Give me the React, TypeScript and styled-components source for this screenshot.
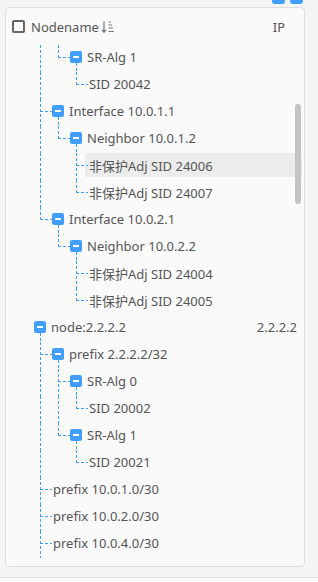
import React from 'react';
import styled, { createGlobalStyle } from 'styled-components';

const LINE = '#409eff';
const dashV = `repeating-linear-gradient(to bottom, ${LINE} 0 3px, transparent 3px 5px)`;
const dashH = `repeating-linear-gradient(to right, ${LINE} 0 3px, transparent 3px 5px)`;

const Global = createGlobalStyle`
  html, body { margin: 0; padding: 0; background: #f5f5f5; }
  body { font-family: "Noto Sans", "Noto Sans CJK SC", sans-serif; }
  * { box-sizing: border-box; }
`;

const Page = styled.div`
  width: 318px;
  height: 582px;
  display: flex;
  flex-direction: column;
  overflow: hidden;
`;

const TopBar = styled.div`
  height: 4px;
  flex: none;
  display: flex;
  justify-content: flex-end;
  align-items: flex-end;
  gap: 5px;
  padding-right: 15px;
  overflow: hidden;
`;

const TopButton = styled.div`
  width: 13px;
  height: 14px;
  flex: none;
  background: ${LINE};
  border-radius: 3px;
`;

const Card = styled.div`
  margin: 3px 13px 0 5px;
  height: 560px;
  flex: none;
  border: 1px solid #dedede;
  border-radius: 4px;
  background: #fafafa;
  display: flex;
  flex-direction: column;
`;

const Header = styled.div`
  height: 37px;
  flex: none;
  display: flex;
  align-items: center;
  padding: 0 19px 0 6px;
  color: #555;
  font-size: 13px;
`;

const Check = styled.span`
  width: 13px;
  height: 13px;
  flex: none;
  border: 2px solid #666;
  border-radius: 2px;
  background: #fff;
`;

const HeaderName = styled.span`
  margin-left: 6px;
  flex: 1;
  display: flex;
  align-items: center;
  gap: 2px;
`;

const HeaderIp = styled.span`
  flex: none;
`;

const Body = styled.div`
  position: relative;
  height: 513px;
  flex: none;
  overflow: hidden;
  padding-right: 2px;
`;

const Row = styled.div`
  display: flex;
  height: 27px;
  padding-left: 25px;
`;

type Vert = 'none' | 'full' | 'half';

const Indent = styled.span<{ $v: Vert; $h: boolean }>`
  width: 18px;
  flex: none;
  position: relative;
  &::before {
    content: '';
    display: ${(p) => (p.$v === 'none' ? 'none' : 'block')};
    position: absolute;
    left: 9px;
    top: 0;
    width: 1px;
    height: ${(p) => (p.$v === 'full' ? '27px' : '13px')};
    background: ${dashV};
  }
  &::after {
    content: '';
    display: ${(p) => (p.$h ? 'block' : 'none')};
    position: absolute;
    left: 9px;
    top: 12px;
    width: 12px;
    height: 1px;
    background: ${dashH};
  }
`;

const Switcher = styled.span`
  width: 16px;
  height: 24px;
  flex: none;
  position: relative;
  &::after {
    content: '';
    position: absolute;
    left: 9px;
    top: 18px;
    width: 1px;
    height: 9px;
    background: ${dashV};
  }
`;

const MinusBox = styled.span`
  position: absolute;
  left: 3px;
  top: 6px;
  width: 12px;
  height: 12px;
  border-radius: 2px;
  background: ${LINE};
  &::before {
    content: '';
    position: absolute;
    left: 3px;
    top: 5px;
    width: 6px;
    height: 2px;
    background: #fff;
  }
`;

const Title = styled.div<{ $active: boolean }>`
  flex: 1;
  height: 24px;
  display: flex;
  align-items: center;
  padding: 0 5px 0 4px;
  font-size: 13px;
  color: #555;
  white-space: nowrap;
  background: ${(p) => (p.$active ? '#ececec' : 'transparent')};
`;

const Ip = styled.span`
  margin-left: auto;
`;

const Thumb = styled.div`
  position: absolute;
  right: 3px;
  top: 59px;
  width: 6px;
  height: 100px;
  border-radius: 3px;
  background: #c4c4c4;
`;

const Footer = styled.div`
  margin-top: 10px;
  flex: 1;
  border-top: 1px solid #e0e0e0;
  background: #fafafa;
`;

type TNode = { title: string; ip?: string; children?: TNode[] };

const tree: TNode[] = [
  {
    title: 'node:1.1.1.1',
    ip: '1.1.1.1',
    children: [
      {
        title: 'prefix 1.1.1.1/32',
        children: [
          { title: 'SR-Alg 0', children: [{ title: 'SID 20001' }] },
          { title: 'SR-Alg 1', children: [{ title: 'SID 20042' }] },
        ],
      },
      {
        title: 'Interface 10.0.1.1',
        children: [
          {
            title: 'Neighbor 10.0.1.2',
            children: [{ title: '非保护Adj SID 24006' }, { title: '非保护Adj SID 24007' }],
          },
        ],
      },
      {
        title: 'Interface 10.0.2.1',
        children: [
          {
            title: 'Neighbor 10.0.2.2',
            children: [{ title: '非保护Adj SID 24004' }, { title: '非保护Adj SID 24005' }],
          },
        ],
      },
    ],
  },
  {
    title: 'node:2.2.2.2',
    ip: '2.2.2.2',
    children: [
      {
        title: 'prefix 2.2.2.2/32',
        children: [
          { title: 'SR-Alg 0', children: [{ title: 'SID 20002' }] },
          { title: 'SR-Alg 1', children: [{ title: 'SID 20021' }] },
        ],
      },
      { title: 'prefix 10.0.1.0/30' },
      { title: 'prefix 10.0.2.0/30' },
      { title: 'prefix 10.0.4.0/30' },
      { title: 'prefix 10.0.5.0/30' },
      { title: 'prefix 10.0.6.0/30' },
    ],
  },
];

type FlatRow = {
  key: string;
  title: string;
  ip?: string;
  depth: number;
  hasChildren: boolean;
  lasts: boolean[];
};

function flatten(nodes: TNode[], depth: number, lasts: boolean[], prefix: string, out: FlatRow[]) {
  nodes.forEach((n, i) => {
    const isLast = i === nodes.length - 1;
    const l = [...lasts, isLast];
    const key = `${prefix}-${i}`;
    out.push({ key, title: n.title, ip: n.ip, depth, hasChildren: !!n.children?.length, lasts: l });
    if (n.children) flatten(n.children, depth + 1, l, key, out);
  });
  return out;
}

const allRows = flatten(tree, 0, [], 'n', []);
const START = 4;
const VISIBLE = 19;
const visibleRows = allRows.slice(START, START + VISIBLE);

const SortIcon = () => (
  <svg width="14" height="14" viewBox="0 0 14 14" fill="none" stroke="#777" strokeWidth="1.2">
    <path d="M3 1.5v10.5M1 9.8l2 2.4 2-2.4" />
    <path d="M7.5 2h2.5M7.5 5h3.5M7.5 8h4.5M7.5 11.5h5.5" />
  </svg>
);

function TreeRow({ row, active }: { row: FlatRow; active: boolean }) {
  const units = [];
  for (let k = 0; k < row.depth; k++) {
    if (k < row.depth - 1) {
      units.push(<Indent key={k} $v={row.lasts[k + 1] ? 'none' : 'full'} $h={false} />);
    } else {
      units.push(<Indent key={k} $v={row.lasts[row.depth] ? 'half' : 'full'} $h />);
    }
  }
  return (
    <Row>
      {units}
      {row.hasChildren && (
        <Switcher>
          <MinusBox />
        </Switcher>
      )}
      <Title $active={active}>
        <span>{row.title}</span>
        {row.ip && <Ip>{row.ip}</Ip>}
      </Title>
    </Row>
  );
}

export default function App() {
  return (
    <Page>
      <Global />
      <TopBar>
        <TopButton />
        <TopButton />
      </TopBar>
      <Card>
        <Header>
          <Check />
          <HeaderName>
            Nodename
            <SortIcon />
          </HeaderName>
          <HeaderIp>IP</HeaderIp>
        </Header>
        <Body>
          {visibleRows.map((r) => (
            <TreeRow key={r.key} row={r} active={r.title === '非保护Adj SID 24006'} />
          ))}
          <Thumb />
        </Body>
      </Card>
      <Footer />
    </Page>
  );
}
